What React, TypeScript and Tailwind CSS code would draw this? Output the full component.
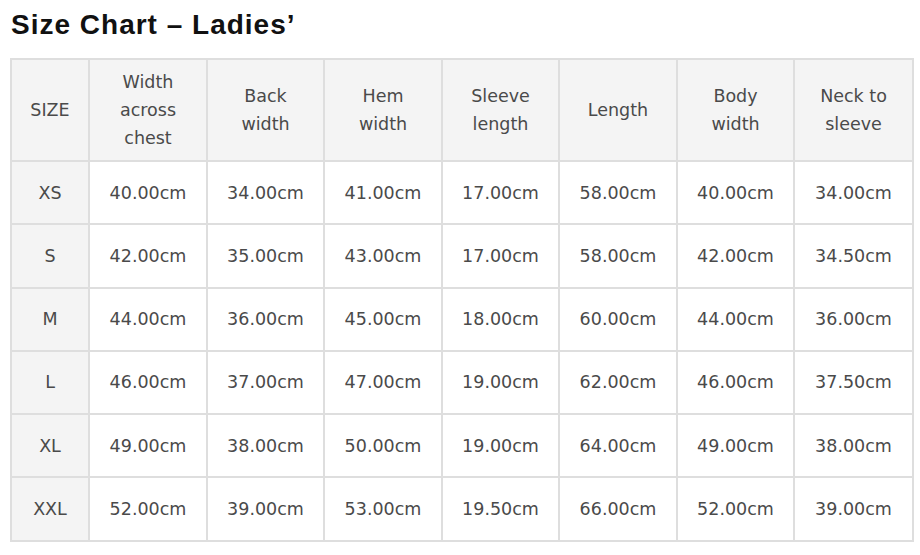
import React from 'react';

const headers = [
    ['SIZE'],
    ['Width', 'across', 'chest'],
    ['Back', 'width'],
    ['Hem', 'width'],
    ['Sleeve', 'length'],
    ['Length'],
    ['Body', 'width'],
    ['Neck to', 'sleeve'],
];

const rows = [
    ['XS', '40.00cm', '34.00cm', '41.00cm', '17.00cm', '58.00cm', '40.00cm', '34.00cm'],
    ['S', '42.00cm', '35.00cm', '43.00cm', '17.00cm', '58.00cm', '42.00cm', '34.50cm'],
    ['M', '44.00cm', '36.00cm', '45.00cm', '18.00cm', '60.00cm', '44.00cm', '36.00cm'],
    ['L', '46.00cm', '37.00cm', '47.00cm', '19.00cm', '62.00cm', '46.00cm', '37.50cm'],
    ['XL', '49.00cm', '38.00cm', '50.00cm', '19.00cm', '64.00cm', '49.00cm', '38.00cm'],
    ['XXL', '52.00cm', '39.00cm', '53.00cm', '19.50cm', '66.00cm', '52.00cm', '39.00cm'],
];

export function App() {
    return (
        <div className="w-[920px] h-[555px] bg-white overflow-hidden font-['Liberation_Sans',Arial,sans-serif]">
            <h1 className="pl-[11px] pt-[7px] text-[28px] leading-[35px] tracking-[1px] font-bold text-[#111]">
                Size Chart – Ladies’
            </h1>
            <table className="ml-[10px] mt-[16px] border-collapse table-fixed w-[902px] font-['DejaVu_Sans',sans-serif] text-[17.5px] text-[#4a4a4a]">
                <colgroup>
                    <col className="w-[78px]" />
                    <col className="w-[118px]" />
                    <col className="w-[117px]" />
                    <col className="w-[118px]" />
                    <col className="w-[117px]" />
                    <col className="w-[118px]" />
                    <col className="w-[117px]" />
                    <col className="w-[119px]" />
                </colgroup>
                <thead>
                    <tr className="h-[102px] bg-[#f4f4f4]">
                        {headers.map((h, i) => (
                            <th
                                key={'h-' + i}
                                className="border-2 border-[#dedede] font-normal text-center leading-[28px] p-0"
                            >
                                {h.map((line) => (
                                    <div key={line}>{line}</div>
                                ))}
                            </th>
                        ))}
                    </tr>
                </thead>
                <tbody>
                    {rows.map((row, r) => (
                        <tr key={'r-' + r} className="h-[63.3px]">
                            {row.map((cell, c) => (
                                <td
                                    key={'c-' + c}
                                    className={
                                        c === 0
                                            ? 'border-2 border-[#dedede] text-center p-0 bg-[#f4f4f4]'
                                            : 'border-2 border-[#dedede] text-center p-0'
                                    }
                                >
                                    {cell}
                                </td>
                            ))}
                        </tr>
                    ))}
                </tbody>
            </table>
        </div>
    );
}

export default App;
